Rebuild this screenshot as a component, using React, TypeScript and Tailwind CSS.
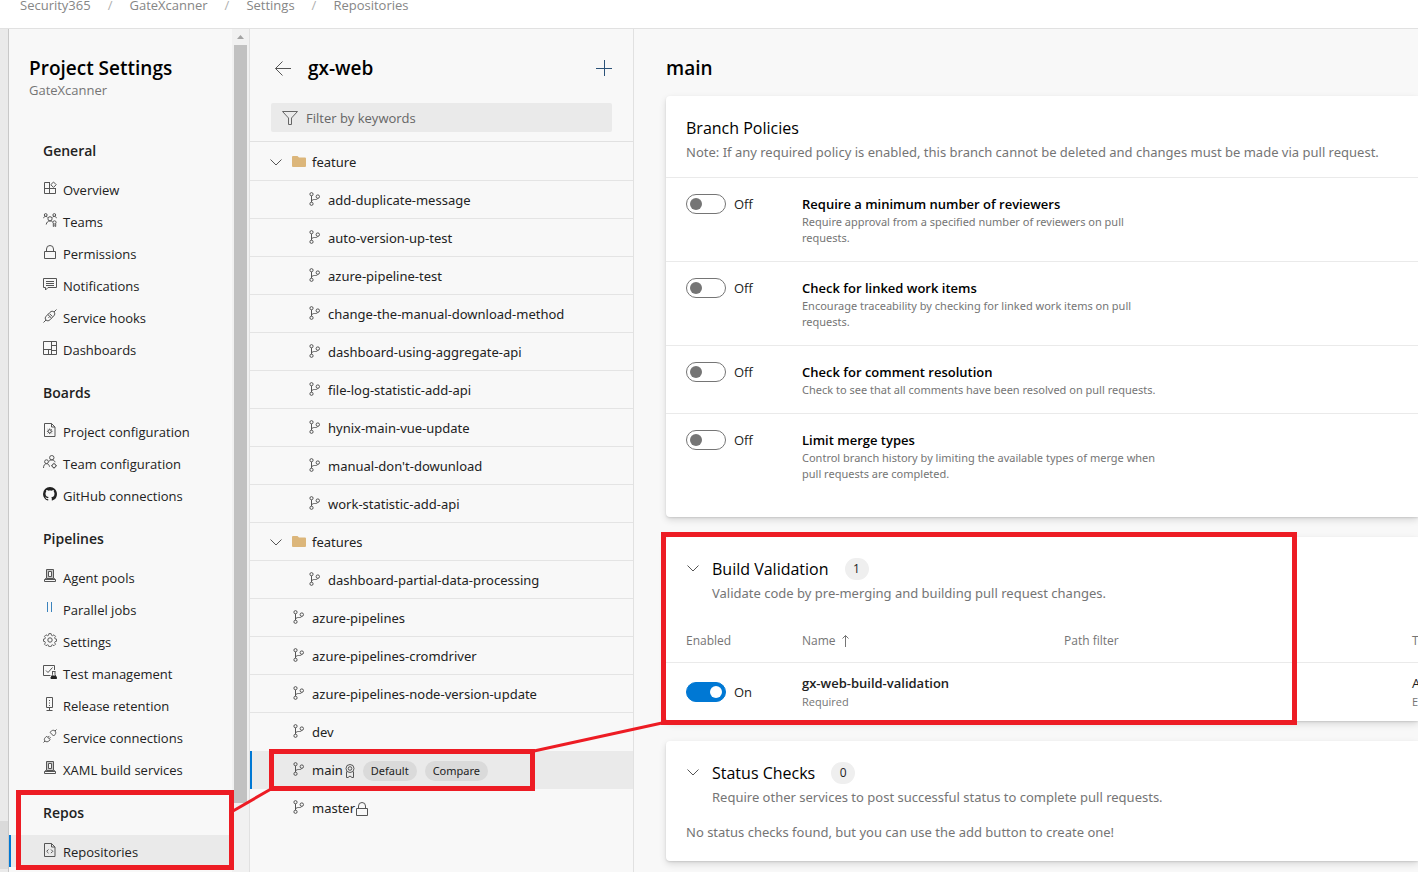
import React from "react";
import { VscGithubInverted } from "react-icons/vsc";

type IconProps = { className?: string };

function Svg({ className = "size-3.5", children }: IconProps & { children: React.ReactNode }) {
  return (
    <svg
      viewBox="0 0 14 14"
      className={`shrink-0 text-[#555] ${className}`}
      fill="none"
      stroke="currentColor"
      strokeWidth="1"
      aria-hidden="true"
    >
      {children}
    </svg>
  );
}

const OverviewIcon = () => (
  <Svg>
    <path d="M7 1.500H1.500v11h11V7M1.500 7.500h11M6.500 1.500v11" />
    <path d="M10.500 1l2.700 2.700-2.700 2.700-2.700-2.700z" />
  </Svg>
);

const TeamsIcon = () => (
  <Svg>
    <circle cx="7" cy="5.800" r="2.100" />
    <circle cx="2.700" cy="2" r="1.400" />
    <circle cx="11.300" cy="2" r="1.400" />
    <circle cx="11.500" cy="9.400" r="1.600" />
    <path d="M.5 5.200C.8 4 1.600 3.400 2.700 3.400c1 0 1.700.4 2.200 1.200M13.500 5.200c-.3-1.200-1.100-1.800-2.200-1.800-1 0-1.700.4-2.200 1.200M3.200 11.500C3.600 9.300 5 7.900 7 7.900c1 0 1.900.3 2.600.9M10.300 10.800v2.700l1.200-.7 1.200.7v-2.700" />
  </Svg>
);

const LockIcon = ({ className }: IconProps) => (
  <Svg className={className}>
    <path d="M1.500 6.500h11v7h-11zM3.500 6.500V4a3.500 3.500 0 017 0v2.500" />
  </Svg>
);

const ChatIcon = () => (
  <Svg>
    <path d="M.5 1.500h13v9H5L2.500 13v-2.500h-2zM3 4.500h8M3 6.500h8M3 8.500h8" />
  </Svg>
);

const PlugIcon = () => (
  <Svg>
    <path d="M.5 13.500L3 11M11 3L13.500.5M3 11c-1.200-1.300-.9-2.700.2-3.800L7 3.300c1.300-1.300 2.900-1.500 4-.3 1.200 1.200 1 2.700-.3 4l-3.800 3.900C5.700 12 4.200 12.200 3 11zM4.800 5.500l3.700 3.700M6.500 4.600L9.400 7.500M5.500 8.800l1.300-1.300" />
  </Svg>
);

const DashboardIcon = () => (
  <Svg>
    <path d="M.5.5h13v13H.5zM8.500.5v13M.5 8.500h8M8.500 4.500h5M5.500 8.500v5M8.500 9.500h5" />
  </Svg>
);

const FileGearIcon = () => (
  <Svg>
    <path d="M1.500.5h7l3.500 3.500v9.500H1.500zM8.500.5V4H12" />
    <circle cx="6.700" cy="8.300" r="1.600" />
    <path d="M6.700 5.500v1.200M6.700 9.900v1.200M3.900 8.300h1.200M8.300 8.300h1.200M4.700 6.300l.9.900M7.800 9.400l.9.900M8.700 6.300l-.9.900M5.600 9.400l-.9.900" />
  </Svg>
);

const PeopleGearIcon = () => (
  <Svg>
    <circle cx="8.800" cy="2.700" r="2.200" />
    <circle cx="3.500" cy="6.700" r="1.900" />
    <path d="M.5 13c0-2.600 1.200-4.300 3-4.300s2.700 1.300 3 3M5.800 6.500c.6-1 1.600-1.600 3-1.600 1.600 0 2.800.8 3.400 2.300" />
    <circle cx="11" cy="10.700" r="1.900" />
    <path d="M11 7.800v1M11 12.600v1M8.100 10.700h1M12.900 10.700h1" />
  </Svg>
);

const GithubIcon = () => <VscGithubInverted className="size-3.5 shrink-0" aria-hidden="true" />;

const MachineIcon = () => (
  <Svg>
    <path d="M3.500.5h7v9h-7z" fill="#c8c8c8" />
    <path d="M5.500 2.500h3v5h-3z" fill="#f8f8f8" />
    <path d="M3.500 8.500L1.500 11v1.500h11V11l-2-2.500M1.500 10.500h11" />
  </Svg>
);

const ParallelIcon = () => (
  <Svg>
    <path d="M4.500 1v10M8.500 1v10" stroke="#3b83bd" />
  </Svg>
);

const GearIcon = () => (
  <Svg>
    <circle cx="7" cy="7" r="2.200" />
    <path
      d="M5.900.6h2.200l.4 1.700 1 .4 1.500-.9 1.500 1.500-.9 1.500.4 1 1.500.3v2.200l-1.500.4-.4 1 .9 1.500-1.500 1.500-1.500-.9-1 .4-.4 1.500H5.900l-.4-1.500-1-.4-1.500.9-1.500-1.500.9-1.500-.4-1-1.500-.4V6.100l1.500-.3.4-1-.9-1.500L3 1.800l1.500.9 1-.4z"
      strokeWidth=".9"
    />
  </Svg>
);

const TestIcon = () => (
  <Svg>
    <path d="M7.500 10.500h-7v-10h11V5M3 5.500L5 7.500l4.500-5M9 6.500h3.500M9.500 6.500v3L7.800 13h5.900L12 9.500v-3" />
    <path d="M9 11h3.500l1 2.500H8z" fill="#222" stroke="#222" />
  </Svg>
);

const ServerIcon = () => (
  <Svg>
    <path d="M3.500.5h6v10h-6zM6.500 10.500v3M3.500 13.500h6M6.500 3v1M6.500 5.500v1M6.500 8v1" />
  </Svg>
);

const ConnectIcon = () => (
  <Svg>
    <path d="M.5 13.500l1.500-1.500M12 2L13.500.5M2 12c-1-1-.8-2.400.2-3.300l1.500-1.500 3.500 3.500-1.500 1.400C4.700 13 3 13 2 12zM12 2c-1-1-2.500-1-3.500 0L7 3.400 10.600 7 12 5.500c1-1 1-2.500 0-3.500zM5 8.300l1.400-1.400M6.200 9.600l1.400-1.400" />
  </Svg>
);

const FileCodeIcon = () => (
  <Svg>
    <path d="M1.500.5h7L12 4v9.500H1.500zM8.500.5V4H12M5.500 6.500L3.700 8.300l1.800 1.800M8 6.500l1.800 1.800L8 10.100" />
  </Svg>
);

const BranchIcon = () => (
  <Svg className="mb-1 size-3.5">
    <circle cx="3.500" cy="2.200" r="1.600" />
    <circle cx="3.500" cy="11.800" r="1.600" />
    <circle cx="9.800" cy="4.600" r="1.700" />
    <path d="M3.500 3.800v6.400M3.500 9.500C4 8 5 7.500 6.500 7.500h1c1.400 0 2-.4 2.300-1.200" />
  </Svg>
);

const FolderIcon = () => (
  <svg viewBox="0 0 14 11" className="mb-0.5 h-[11px] w-3.5 shrink-0" aria-hidden="true">
    <path d="M0 1a1 1 0 011-1h4.500L7 1.500h6a1 1 0 011 1V10a1 1 0 01-1 1H1a1 1 0 01-1-1z" fill="#dcb67a" />
  </svg>
);

const ChevronIcon = () => (
  <Svg>
    <path d="M1.500 4.500L7 10l5.500-5.500" />
  </Svg>
);

const RibbonIcon = () => (
  <Svg>
    <circle cx="7" cy="4.500" r="4" />
    <circle cx="7" cy="4.500" r="1.800" />
    <path d="M3.500 7.500v6h1.500l2-1.500 2 1.500h1.500v-6" />
  </Svg>
);

const FilterIcon = () => (
  <svg viewBox="0 0 16 16" className="size-4 shrink-0" fill="none" stroke="currentColor" aria-hidden="true">
    <path d="M.5 1.500h15L9.500 8v6.500h-3V8z" />
  </svg>
);

type NavItem = { label: string; icon: () => React.ReactElement; active?: boolean };

const navGroups: { title: string; items: NavItem[] }[] = [
  {
    title: "General",
    items: [
      { label: "Overview", icon: OverviewIcon },
      { label: "Teams", icon: TeamsIcon },
      { label: "Permissions", icon: LockIcon },
      { label: "Notifications", icon: ChatIcon },
      { label: "Service hooks", icon: PlugIcon },
      { label: "Dashboards", icon: DashboardIcon },
    ],
  },
  {
    title: "Boards",
    items: [
      { label: "Project configuration", icon: FileGearIcon },
      { label: "Team configuration", icon: PeopleGearIcon },
      { label: "GitHub connections", icon: GithubIcon },
    ],
  },
  {
    title: "Pipelines",
    items: [
      { label: "Agent pools", icon: MachineIcon },
      { label: "Parallel jobs", icon: ParallelIcon },
      { label: "Settings", icon: GearIcon },
      { label: "Test management", icon: TestIcon },
      { label: "Release retention", icon: ServerIcon },
      { label: "Service connections", icon: ConnectIcon },
      { label: "XAML build services", icon: MachineIcon },
    ],
  },
  { title: "Repos", items: [{ label: "Repositories", icon: FileCodeIcon, active: true }] },
];

type Branch = { name: string; kind: "folder" | "child" | "branch" };

const branches: Branch[] = [
  { name: "feature", kind: "folder" },
  { name: "add-duplicate-message", kind: "child" },
  { name: "auto-version-up-test", kind: "child" },
  { name: "azure-pipeline-test", kind: "child" },
  { name: "change-the-manual-download-method", kind: "child" },
  { name: "dashboard-using-aggregate-api", kind: "child" },
  { name: "file-log-statistic-add-api", kind: "child" },
  { name: "hynix-main-vue-update", kind: "child" },
  { name: "manual-don't-dowunload", kind: "child" },
  { name: "work-statistic-add-api", kind: "child" },
  { name: "features", kind: "folder" },
  { name: "dashboard-partial-data-processing", kind: "child" },
  { name: "azure-pipelines", kind: "branch" },
  { name: "azure-pipelines-cromdriver", kind: "branch" },
  { name: "azure-pipelines-node-version-update", kind: "branch" },
  { name: "dev", kind: "branch" },
  { name: "main", kind: "branch" },
  { name: "master", kind: "branch" },
];

const policies = [
  {
    title: "Require a minimum number of reviewers",
    text: "Require approval from a specified number of reviewers on pull requests.",
  },
  {
    title: "Check for linked work items",
    text: "Encourage traceability by checking for linked work items on pull requests.",
  },
  {
    title: "Check for comment resolution",
    text: "Check to see that all comments have been resolved on pull requests.",
  },
  {
    title: "Limit merge types",
    text: "Control branch history by limiting the available types of merge when pull requests are completed.",
  },
];

function Toggle({ on = false, label }: { on?: boolean; label: string }) {
  return (
    <label className="flex h-5 items-center gap-2 text-[13px] font-normal text-[#222]">
      <input
        type="checkbox"
        role="switch"
        aria-label={label}
        defaultChecked={on}
        className="flex h-5 w-10 shrink-0 appearance-none items-center rounded-full border border-[#757575] px-[3px] before:size-3 before:rounded-full before:bg-[#757575] checked:justify-end checked:border-[#0078d4] checked:bg-[#0078d4] checked:before:bg-white"
      />
      <span className="pt-0.5">{on ? "On" : "Off"}</span>
    </label>
  );
}

function Card({ children }: { children: React.ReactNode }) {
  return (
    <section className="rounded-l bg-white shadow-[0_3px_7px_rgba(0,0,0,0.13),0_1px_2px_rgba(0,0,0,0.11)]">
      {children}
    </section>
  );
}

function CardHeading({ title, count, text }: { title: string; count: number; text: string }) {
  return (
    <div className="flex gap-3 pt-5 pl-5">
      <button type="button" aria-label={`Collapse ${title}`} className="flex h-[22px] w-3.5 items-center">
        <ChevronIcon />
      </button>
      <div>
        <div className="flex h-6 items-center gap-4">
          <h2 className="text-base leading-6 text-black">{title}</h2>
          <span className="flex h-[22px] w-6 items-center justify-center rounded-full bg-[#efefef] text-xs">
            {count}
          </span>
        </div>
        <p className="font-['Noto_Sans',sans-serif] text-[13px] leading-6 text-[#757575]">{text}</p>
      </div>
    </div>
  );
}

function Sidebar() {
  return (
    <nav aria-label="Project settings" className="min-w-0 flex-1">
      <div className="h-[94px] pt-[27px] pl-5">
        <h1 className="text-[19px] leading-6 font-semibold text-black">Project Settings</h1>
        <p className="text-[13px] leading-5 text-[#757575]">GateXcanner</p>
      </div>
      {navGroups.map((group) => (
        <div key={group.title}>
          <h2 className="h-[50px] pt-4 pl-[34px] text-sm leading-6 font-semibold text-[#222]">{group.title}</h2>
          <ul>
            {group.items.map(({ label, icon: Icon, active }) => (
              <li key={label}>
                <a
                  href="#"
                  className={
                    active
                      ? "flex h-8 items-center gap-1.5 border-l-2 border-[#0078d4] bg-[#eaeaea] pt-1 pl-8 text-[13px] text-[#222]"
                      : "flex h-8 items-center gap-1.5 pt-1 pl-[34px] text-[13px] text-[#222]"
                  }
                >
                  <span className="pb-1.5">
                    <Icon />
                  </span>
                  {label}
                </a>
              </li>
            ))}
          </ul>
        </div>
      ))}
    </nav>
  );
}

function BranchRow({ name, kind }: Branch) {
  if (kind === "folder") {
    return (
      <button
        type="button"
        className="flex h-[38px] w-full items-center gap-1.5 border-b border-[#e4e4e4] pt-0.5 pl-[19px] text-[13px]"
      >
        <span className="w-[17px] pb-0.5">
          <ChevronIcon />
        </span>
        <FolderIcon />
        {name}
      </button>
    );
  }
  if (kind === "child") {
    return (
      <a
        href="#"
        className="flex h-[38px] items-center gap-1.5 border-b border-[#e4e4e4] pt-0.5 pl-[58px] text-[13px]"
      >
        <BranchIcon />
        {name}
      </a>
    );
  }
  if (name === "main") {
    return (
      <a
        href="#"
        className="flex h-[38px] items-center gap-1.5 border-l-2 border-[#0078d4] bg-[#eaeaea] pt-0.5 pl-10 text-[13px]"
      >
        <BranchIcon />
        <span className="flex items-center">
          {name}
          <RibbonIcon />
        </span>
        <span className="flex gap-2 text-[11px]">
          <span className="rounded-full bg-[#dadada] px-2 leading-5">Default</span>
          <span className="rounded-full bg-[#dadada] px-2 leading-5">Compare</span>
        </span>
      </a>
    );
  }
  if (name === "master") {
    return (
      <a href="#" className="flex h-[38px] items-center gap-1.5 pt-0.5 pl-[42px] text-[13px]">
        <BranchIcon />
        <span className="flex items-center">
          {name}
          <LockIcon />
        </span>
      </a>
    );
  }
  return (
    <a
      href="#"
      className={
        name === "dev"
          ? "flex h-[38px] items-center gap-1.5 pt-0.5 pl-[42px] text-[13px]"
          : "flex h-[38px] items-center gap-1.5 border-b border-[#e4e4e4] pt-0.5 pl-[42px] text-[13px]"
      }
    >
      <BranchIcon />
      {name}
    </a>
  );
}

export default function App() {
  return (
    <div className="relative flex h-screen flex-col overflow-hidden bg-[#f8f8f8] font-['Open_Sans','Noto_Sans',sans-serif] text-[#222]">
      <header className="h-[29px] shrink-0 border-b border-[#e1e1e1] bg-white pl-5">
        <nav aria-label="Breadcrumb" className="flex gap-[17px] text-[13px] leading-[11px] text-[#868686]">
          <a href="#">Security365</a>
          <span className="text-[#b0b0b0]">/</span>
          <a href="#">GateXcanner</a>
          <span className="text-[#b0b0b0]">/</span>
          <a href="#">Settings</a>
          <span className="text-[#b0b0b0]">/</span>
          <a href="#">Repositories</a>
        </nav>
      </header>

      <div className="flex min-h-0 flex-1">
        <div className="flex w-[9px] shrink-0 flex-col justify-end border-r border-[#c8c8c8] bg-[#eaeaea] pb-[3px]">
          <div className="h-12 bg-[#dadada]" />
        </div>

        <aside className="flex w-[241px] shrink-0 border-r border-[#e1e1e1]">
          <Sidebar />
          <div className="flex w-[17px] shrink-0 flex-col items-center bg-[#f1f1f1]">
            <svg viewBox="0 0 17 16" className="h-4 w-[17px]" aria-hidden="true">
              <path d="M5 10l3.500-4 3.500 4z" fill="#a3a3a3" />
            </svg>
            <div className="h-[758px] w-[13px] bg-[#c1c1c1]" />
          </div>
        </aside>

        <section aria-label="Branches" className="w-[384px] shrink-0 border-r border-[#e1e1e1]">
          <div className="border-b border-[#e1e1e1] px-[21px] pb-[9px]">
            <div className="flex h-[74px] items-center gap-4 pt-1 pl-[3px]">
              <button type="button" aria-label="Back" className="text-[#555]">
                <svg viewBox="0 0 18 16" className="h-4 w-[18px]" fill="none" stroke="currentColor" aria-hidden="true">
                  <path d="M17 8.500H1.500M8.500 1.500l-7 7 7 7" />
                </svg>
              </button>
              <h2 className="flex-1 text-[19px] leading-6 font-semibold text-black">gx-web</h2>
              <button type="button" aria-label="Add branch" className="text-[#2b5278]">
                <svg viewBox="0 0 16 16" className="size-4" fill="none" stroke="currentColor" aria-hidden="true">
                  <path d="M8.500 0v16M0 8.500h16" />
                </svg>
              </button>
            </div>
            <label className="flex h-[29px] items-center gap-2 rounded-xs bg-[#eaeaea] px-[11px] text-[#666]">
              <FilterIcon />
              <input
                type="text"
                aria-label="Filter by keywords"
                placeholder="Filter by keywords"
                className="min-w-0 flex-1 bg-transparent pt-0.5 text-[13px] outline-none placeholder:text-[#666]"
              />
            </label>
          </div>
          <div className="pt-px font-['Noto_Sans',sans-serif]">
            {branches.map((branch) => (
              <BranchRow key={branch.name} {...branch} />
            ))}
          </div>
        </section>

        <main className="min-w-0 flex-1 pl-8">
          <h1 className="h-[67px] pt-[27px] text-[19px] leading-6 font-semibold text-black">main</h1>
          <div className="flex flex-col gap-5">
            <Card>
              <div className="border-b border-[#eaeaea] px-5 pt-5 pb-[13px]">
                <h2 className="text-base leading-6 text-black">Branch Policies</h2>
                <p className="font-['Noto_Sans',sans-serif] text-[13px] leading-6 whitespace-nowrap text-[#757575]">
                  Note: If any required policy is enabled, this branch cannot be deleted and changes must be made via
                  pull request.
                </p>
              </div>
              <ul className="divide-y divide-[#eaeaea] pb-5">
                {policies.map((policy) => (
                  <li key={policy.title} className="flex px-5 pt-4 pb-[15px]">
                    <div className="w-[116px] shrink-0">
                      <Toggle label={policy.title} />
                    </div>
                    <div className="max-w-[368px]">
                      <h3 className="text-[13px] leading-5 font-semibold text-black">{policy.title}</h3>
                      <p className="font-['Noto_Sans',sans-serif] text-[11px] leading-4 text-[#757575]">
                        {policy.text}
                      </p>
                    </div>
                  </li>
                ))}
              </ul>
            </Card>

            <Card>
              <CardHeading
                title="Build Validation"
                count={1}
                text="Validate code by pre-merging and building pull request changes."
              />
              <table className="mt-3 w-full table-fixed text-left">
                <colgroup>
                  <col className="w-[136px]" />
                  <col className="w-[262px]" />
                  <col className="w-[348px]" />
                  <col />
                </colgroup>
                <thead>
                  <tr className="h-[45px] border-b border-[#eaeaea] text-xs text-[#757575]">
                    <th className="pt-1 pl-5 font-medium">Enabled</th>
                    <th className="pt-1 font-medium">
                      <span className="flex items-center gap-1.5">
                        Name
                        <svg viewBox="0 0 8 14" className="h-3.5 w-2" fill="none" stroke="currentColor" aria-hidden="true">
                          <path d="M3.500 13V1.500M.5 4.500l3-3 3 3" />
                        </svg>
                      </span>
                    </th>
                    <th className="pt-1 font-medium">Path filter</th>
                    <th className="pt-1 font-medium">T</th>
                  </tr>
                </thead>
                <tbody>
                  <tr className="h-[59px]">
                    <td className="pl-5">
                      <Toggle on label="gx-web-build-validation" />
                    </td>
                    <td>
                      <div className="text-[13px] leading-5 font-semibold">gx-web-build-validation</div>
                      <div className="text-[11px] leading-[18px] text-[#757575]">Required</div>
                    </td>
                    <td />
                    <td>
                      <div className="text-[13px] leading-5">A</div>
                      <div className="text-[11px] leading-[18px] text-[#757575]">E</div>
                    </td>
                  </tr>
                </tbody>
              </table>
            </Card>

            <Card>
              <CardHeading
                title="Status Checks"
                count={0}
                text="Require other services to post successful status to complete pull requests."
              />
              <p className="px-5 pt-[13px] pb-[19px] font-['Noto_Sans',sans-serif] text-[13px] leading-5 text-[#757575]">
                No status checks found, but you can use the add button to create one!
              </p>
            </Card>
          </div>
        </main>
      </div>

      <svg
        className="pointer-events-none absolute top-0 left-0 h-[872px] w-[1418px]"
        viewBox="0 0 1418 872"
        fill="none"
        stroke="#ed1c24"
        aria-hidden="true"
      >
        <path d="M233 811L271 789M534 751L662 723" strokeWidth="3" />
        <path d="M18.500 792.500h213v75h-213zM271.500 751.500h261v37h-261zM663.500 534.500h631v188h-631z" strokeWidth="5" />
      </svg>
    </div>
  );
}
